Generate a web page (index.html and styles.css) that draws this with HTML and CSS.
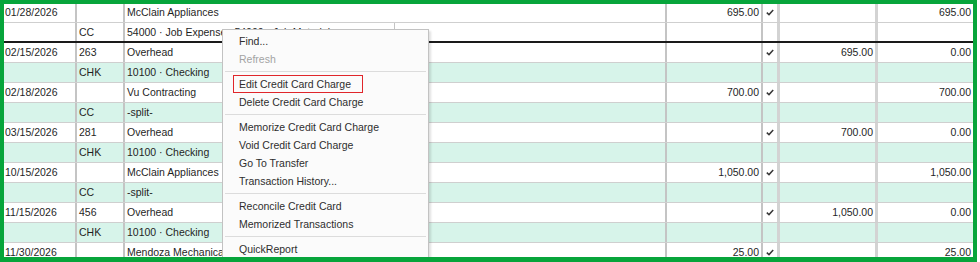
FILE: index.html
```html
<!DOCTYPE html>
<html lang="en">
<head>
    <meta charset="UTF-8">
    <title>Credit Card Register</title>
    <link rel="stylesheet" href="styles.css">
</head>
<body>
    <div class="frame">
        <div class="register">
            <!-- selected transaction -->
            <div class="row top">
                <div class="c date">01/28/2026</div><div class="c num"></div><div class="c payee">McClain Appliances</div>
                <div class="c charge">695.00</div><div class="c chk"><svg viewBox="0 0 8 7"><path d="M0.8 3.6 L3 5.6 L7.2 1"/></svg></div><div class="c pay"></div><div class="c bal">695.00</div>
            </div>
            <div class="row bot selected">
                <div class="c date"></div><div class="c num">CC</div><div class="c acct">54000 · Job Expenses:54000 · Job Materials</div><div class="c memo"></div>
                <div class="c charge"></div><div class="c chk"></div><div class="c pay"></div><div class="c bal"></div>
            </div>

            <div class="row top">
                <div class="c date">02/15/2026</div><div class="c num">263</div><div class="c payee">Overhead</div>
                <div class="c charge"></div><div class="c chk"><svg viewBox="0 0 8 7"><path d="M0.8 3.6 L3 5.6 L7.2 1"/></svg></div><div class="c pay">695.00</div><div class="c bal">0.00</div>
            </div>
            <div class="row bot">
                <div class="c date"></div><div class="c num">CHK</div><div class="c acct">10100 · Checking</div><div class="c memo"></div>
                <div class="c charge"></div><div class="c chk"></div><div class="c pay"></div><div class="c bal"></div>
            </div>

            <div class="row top">
                <div class="c date">02/18/2026</div><div class="c num"></div><div class="c payee">Vu Contracting</div>
                <div class="c charge">700.00</div><div class="c chk"><svg viewBox="0 0 8 7"><path d="M0.8 3.6 L3 5.6 L7.2 1"/></svg></div><div class="c pay"></div><div class="c bal">700.00</div>
            </div>
            <div class="row bot">
                <div class="c date"></div><div class="c num">CC</div><div class="c acct">-split-</div><div class="c memo"></div>
                <div class="c charge"></div><div class="c chk"></div><div class="c pay"></div><div class="c bal"></div>
            </div>

            <div class="row top">
                <div class="c date">03/15/2026</div><div class="c num">281</div><div class="c payee">Overhead</div>
                <div class="c charge"></div><div class="c chk"><svg viewBox="0 0 8 7"><path d="M0.8 3.6 L3 5.6 L7.2 1"/></svg></div><div class="c pay">700.00</div><div class="c bal">0.00</div>
            </div>
            <div class="row bot">
                <div class="c date"></div><div class="c num">CHK</div><div class="c acct">10100 · Checking</div><div class="c memo"></div>
                <div class="c charge"></div><div class="c chk"></div><div class="c pay"></div><div class="c bal"></div>
            </div>

            <div class="row top">
                <div class="c date">10/15/2026</div><div class="c num"></div><div class="c payee">McClain Appliances</div>
                <div class="c charge">1,050.00</div><div class="c chk"><svg viewBox="0 0 8 7"><path d="M0.8 3.6 L3 5.6 L7.2 1"/></svg></div><div class="c pay"></div><div class="c bal">1,050.00</div>
            </div>
            <div class="row bot">
                <div class="c date"></div><div class="c num">CC</div><div class="c acct">-split-</div><div class="c memo"></div>
                <div class="c charge"></div><div class="c chk"></div><div class="c pay"></div><div class="c bal"></div>
            </div>

            <div class="row top">
                <div class="c date">11/15/2026</div><div class="c num">456</div><div class="c payee">Overhead</div>
                <div class="c charge"></div><div class="c chk"><svg viewBox="0 0 8 7"><path d="M0.8 3.6 L3 5.6 L7.2 1"/></svg></div><div class="c pay">1,050.00</div><div class="c bal">0.00</div>
            </div>
            <div class="row bot">
                <div class="c date"></div><div class="c num">CHK</div><div class="c acct">10100 · Checking</div><div class="c memo"></div>
                <div class="c charge"></div><div class="c chk"></div><div class="c pay"></div><div class="c bal"></div>
            </div>

            <div class="row top">
                <div class="c date">11/30/2026</div><div class="c num"></div><div class="c payee">Mendoza Mechanical</div>
                <div class="c charge">25.00</div><div class="c chk"><svg viewBox="0 0 8 7"><path d="M0.8 3.6 L3 5.6 L7.2 1"/></svg></div><div class="c pay"></div><div class="c bal">25.00</div>
            </div>
        </div>

        <!-- right-click menu -->
        <ul class="context-menu">
            <li>Find...</li>
            <li class="disabled">Refresh</li>
            <li class="sep"></li>
            <li><span class="marked">Edit Credit Card Charge</span></li>
            <li>Delete Credit Card Charge</li>
            <li class="sep"></li>
            <li>Memorize Credit Card Charge</li>
            <li>Void Credit Card Charge</li>
            <li>Go To Transfer</li>
            <li>Transaction History...</li>
            <li class="sep"></li>
            <li>Reconcile Credit Card</li>
            <li>Memorized Transactions</li>
            <li class="sep"></li>
            <li>QuickReport</li>
        </ul>
    </div>
</body>
</html>
```

FILE: styles.css
```css
:root {
    --frame-green: #07a53b;
    --row-green: #d7f4ea;
    --row-line: #cfcfcf;
    --col-line: #c4c4c4;
    --col-line-light: #d3d3d3;
    --text: #1f1f1f;
    --menu-text: #2e2e2e;
}

body {
    margin: 0;
    background-color: #ffffff;
    font-family: 'Liberation Sans', Arial, sans-serif;
    font-size: 10.5px;
    color: var(--text);
}

.frame {
    position: relative;
    width: 977px;
    height: 262px;
    box-sizing: border-box;
    border: 4px solid var(--frame-green);
    border-bottom-width: 5px;
    overflow: hidden;
    background-color: #ffffff;
}

.register {
    margin-top: -1px;
}

.row {
    display: grid;
    grid-template-columns: 73px 48px 542px 96px 17px 98px 95px;
    height: 20px;
    box-sizing: border-box;
    border-bottom: 1px solid var(--row-line);
    background-color: #ffffff;
}

.row.bot {
    grid-template-columns: 73px 48px 270px 272px 96px 17px 98px 95px;
    background-color: var(--row-green);
}

.row.bot.selected {
    background-color: #ffffff;
    border-bottom: 2px solid #1a1a1a;
}

.c {
    line-height: 19px;
    white-space: nowrap;
    overflow: hidden;
    border-right: 2px solid var(--col-line);
}

.date {
    padding-left: 1px;
}

.num,
.payee,
.acct,
.memo {
    padding-left: 2px;
}

.acct {
    border-right-width: 1px;
}

.charge,
.pay,
.bal {
    text-align: right;
    padding-right: 2px;
}

.chk,
.pay {
    border-right: 3px solid var(--col-line-light);
}

.bal {
    border-right: none;
}

.chk {
    display: flex;
    align-items: center;
    justify-content: center;
}

.chk svg {
    width: 8px;
    height: 7px;
    fill: none;
    stroke: #383838;
    stroke-width: 1.5;
}

.context-menu {
    position: absolute;
    left: 218px;
    top: 25px;
    width: 205px;
    margin: 0;
    padding: 2px 0;
    list-style: none;
    background-color: #fbfbfb;
    border: 1px solid #c2c2c2;
    box-shadow: 2px 2px 2px rgba(0, 0, 0, 0.12);
    color: var(--menu-text);
}

.context-menu li {
    height: 18px;
    line-height: 18px;
    padding-left: 16px;
    white-space: nowrap;
}

.context-menu li.disabled {
    color: #a3a3a3;
}

.context-menu li.sep {
    height: 1px;
    margin: 3px 2px;
    padding: 0;
    background-color: #dcdcdc;
}

.marked {
    display: inline-block;
    margin-left: -6px;
    padding: 0 11px 0 5px;
    height: 16px;
    line-height: 16px;
    border: 1px solid #e0262b;
}
```
